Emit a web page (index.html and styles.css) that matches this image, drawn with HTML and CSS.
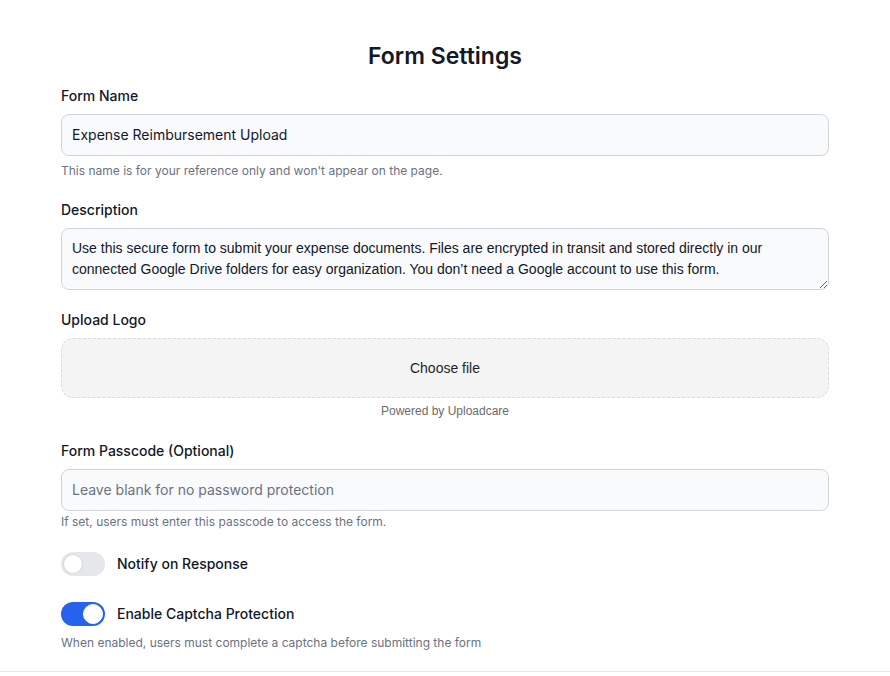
FILE: index.html
```html
<!DOCTYPE html>
<html>
  <head>
    <title>Form Settings</title>
    <meta charset="UTF-8" />
    <meta name="viewport" content="width=device-width, initial-scale=1" />
    <link rel="stylesheet" href="styles.css">
  </head>
  <body>
    <div class="settings">
      <h1>Form Settings</h1>

      <div class="field">
        <label for="form-name">Form Name</label>
        <input type="text" id="form-name" value="Expense Reimbursement Upload" />
        <p class="hint spaced">This name is for your reference only and won't appear on the page.</p>
      </div>

      <div class="field">
        <label for="description">Description</label>
        <textarea id="description" rows="2">Use this secure form to submit your expense documents. Files are encrypted in transit and stored directly in our connected Google Drive folders for easy organization. You don’t need a Google account to use this form.</textarea>
      </div>

      <div class="field">
        <label>Upload Logo</label>
        <div class="uploader">Choose file</div>
        <p class="powered">Powered by Uploadcare</p>
      </div>

      <div class="field">
        <label for="passcode">Form Passcode (Optional)</label>
        <input type="text" id="passcode" placeholder="Leave blank for no password protection" />
        <p class="hint">If set, users must enter this passcode to access the form.</p>
      </div>

      <div class="toggles">
        <div class="toggle-row">
          <span class="switch"></span>
          <span class="toggle-label">Notify on Response</span>
        </div>

        <div class="toggle-row">
          <span class="switch on"></span>
          <span class="toggle-label">Enable Captcha Protection</span>
        </div>
        <p class="hint captcha-hint">When enabled, users must complete a captcha before submitting the form</p>
      </div>
    </div>

    <div class="footer"></div>
  </body>
</html>
```

FILE: styles.css
```css
body {
  margin: 0;
  background: #fff;
  color: #111827;
  font-family: Inter, "Noto Sans", sans-serif;
  font-size: 14px;
}
.settings {
  max-width: 768px;
  margin: 0 auto;
  padding-top: 40px;
  padding-bottom: 19px;
}
h1 {
  margin: 0 0 14px;
  font-size: 23px;
  line-height: 32px;
  font-weight: 600;
  text-align: center;
}
.field {
  margin-bottom: 20px;
}
label {
  display: block;
  font-weight: 500;
  line-height: 20px;
  margin-bottom: 8px;
}
input,
textarea {
  display: block;
  box-sizing: border-box;
  width: 100%;
  margin: 0;
  padding: 10px;
  border: 1px solid #d1d5db;
  border-radius: 8px;
  background: #f9fafb;
  color: #111827;
  font-family: Inter, "Noto Sans", sans-serif;
  font-size: 14px;
  line-height: 20px;
}
input::placeholder {
  color: #6b7280;
}
textarea {
  height: 62px;
  padding: 9px 10px;
  line-height: 21px;
  font-family: "Liberation Sans", Arial, sans-serif;
  resize: vertical;
}
.hint {
  margin: 2px 0 0;
  font-size: 12px;
  line-height: 18px;
  color: #6b7280;
}
.hint.spaced {
  margin-top: 6px;
}
.uploader {
  height: 60px;
  box-sizing: border-box;
  display: flex;
  align-items: center;
  justify-content: center;
  background: #f4f4f4;
  border: 1px dashed #dcdcdc;
  border-radius: 12px;
  font-family: "Liberation Sans", Arial, sans-serif;
  font-size: 14px;
  color: #1f1f1f;
}
.powered {
  margin: 3px 0 0;
  text-align: center;
  font-family: "Liberation Sans", Arial, sans-serif;
  font-size: 12px;
  line-height: 20px;
  color: #6b6b6b;
}
.toggles {
  padding-top: 1px;
}
.toggle-row {
  display: flex;
  align-items: center;
  gap: 12px;
  margin-bottom: 26px;
}
.toggle-row + .captcha-hint {
  margin-top: -18px;
}
.switch {
  position: relative;
  width: 44px;
  height: 24px;
  border-radius: 12px;
  background: #e5e7eb;
  flex-shrink: 0;
}
.switch::after {
  content: "";
  position: absolute;
  top: 2px;
  left: 2px;
  width: 18px;
  height: 18px;
  border-radius: 50%;
  background: #fff;
  border: 1px solid #d1d5db;
}
.switch.on {
  background: #2563eb;
}
.switch.on::after {
  left: 22px;
  border-color: #fff;
}
.toggle-label {
  font-weight: 500;
  line-height: 20px;
}
.footer {
  border-top: 1px solid #e5e7eb;
  height: 4px;
}
```
